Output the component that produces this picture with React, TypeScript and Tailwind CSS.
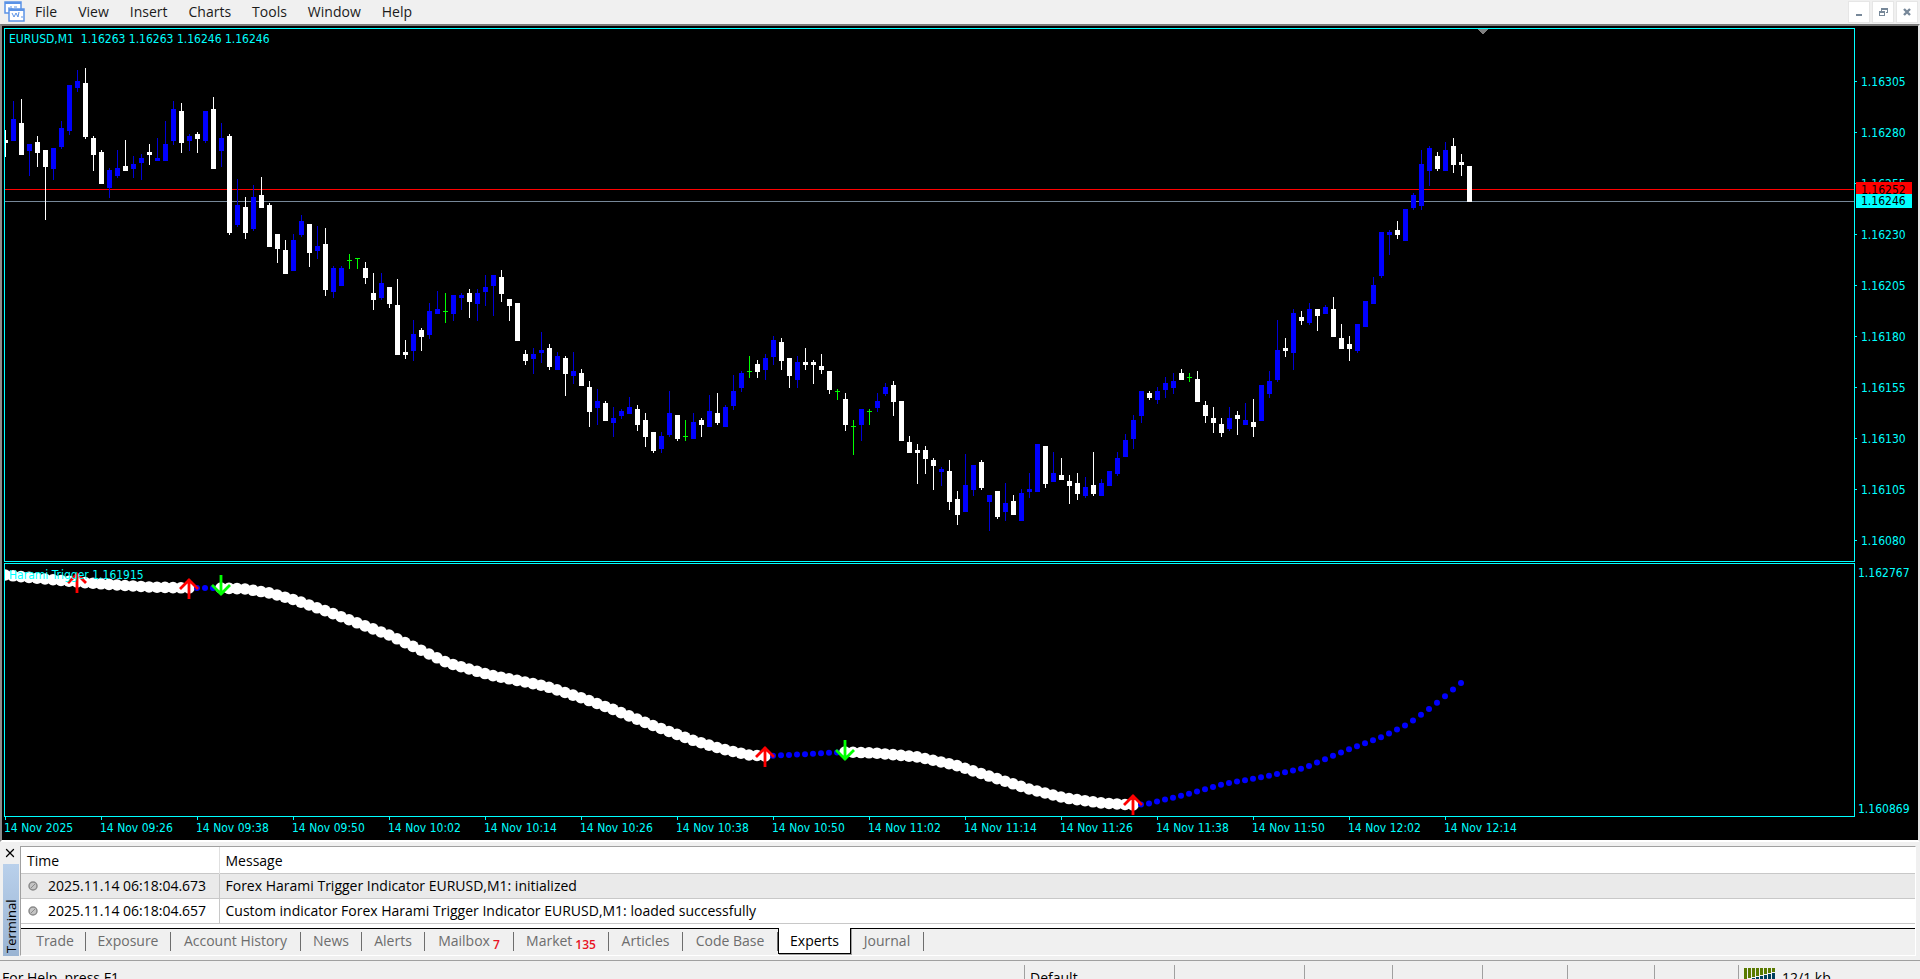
import { X } from "lucide-react";

type Kind = "up" | "down" | "flat";
type Candle = [Kind, number, number, number, number];

const U: Kind = "up";
const D: Kind = "down";
const F: Kind = "flat";

const STEP = 8;
const PRICE_TOP = 29;
const TREND_TOP = 564;

// kind, high, body top, body bottom, low
const candles: Candle[] = [
  [D, 130, 140, 143, 157], [U, 101, 119, 141, 141], [D, 99, 123, 155, 155], [U, 144, 144, 151, 176],
  [D, 136, 142, 153, 167], [D, 150, 150, 167, 220], [U, 148, 148, 169, 180], [U, 121, 128, 147, 149],
  [U, 85, 85, 131, 135], [U, 70, 81, 88, 92], [D, 68, 83, 137, 139], [D, 136, 138, 155, 171],
  [D, 150, 152, 184, 184], [U, 168, 170, 188, 198], [U, 150, 168, 176, 178], [D, 140, 166, 171, 171],
  [U, 156, 164, 169, 178], [U, 154, 158, 163, 180], [D, 144, 152, 155, 165], [U, 138, 158, 161, 161],
  [U, 121, 144, 161, 161], [U, 101, 109, 141, 145], [D, 103, 111, 143, 153], [U, 134, 136, 141, 151],
  [D, 132, 134, 139, 153], [U, 111, 111, 141, 143], [D, 97, 109, 169, 169], [U, 123, 138, 151, 167],
  [D, 134, 136, 233, 235], [U, 179, 205, 225, 227], [D, 197, 207, 233, 239], [U, 185, 197, 229, 231],
  [D, 177, 195, 208, 208], [D, 203, 205, 247, 247], [D, 234, 234, 249, 263], [D, 240, 250, 274, 274],
  [U, 234, 240, 271, 271], [U, 215, 221, 235, 237], [D, 224, 224, 253, 267], [U, 226, 246, 251, 259],
  [D, 228, 244, 290, 296], [U, 266, 268, 292, 298], [U, 266, 268, 286, 286], [F, 254, 260, 261, 269],
  [F, 258, 258, 259, 269], [D, 262, 268, 278, 284], [D, 273, 293, 300, 310], [U, 273, 283, 298, 300],
  [D, 287, 287, 304, 308], [D, 279, 305, 355, 355], [D, 340, 352, 355, 359], [U, 320, 334, 351, 361],
  [D, 328, 330, 337, 351], [U, 303, 311, 335, 339], [U, 291, 309, 314, 314], [F, 293, 311, 312, 323],
  [U, 295, 295, 314, 321], [U, 293, 295, 298, 310], [D, 289, 293, 302, 318], [U, 289, 293, 304, 321],
  [U, 275, 287, 292, 306], [U, 275, 275, 286, 316], [D, 270, 277, 294, 302], [D, 299, 299, 306, 321],
  [D, 303, 303, 341, 341], [D, 350, 354, 361, 365], [U, 348, 354, 359, 374], [U, 332, 350, 353, 363],
  [D, 344, 348, 367, 370], [U, 352, 356, 370, 370], [D, 356, 358, 374, 396], [U, 352, 371, 376, 384],
  [D, 369, 373, 386, 386], [D, 381, 387, 412, 427], [U, 389, 401, 408, 425], [D, 401, 403, 421, 421],
  [U, 407, 418, 423, 437], [U, 409, 411, 416, 419], [U, 397, 407, 414, 414], [D, 405, 409, 425, 431],
  [D, 413, 420, 437, 447], [D, 432, 432, 451, 453], [U, 432, 436, 449, 453], [U, 391, 413, 435, 437],
  [D, 415, 415, 439, 441], [F, 420, 436, 437, 441], [U, 413, 422, 439, 439], [D, 418, 420, 425, 437],
  [U, 395, 411, 427, 427], [D, 393, 413, 423, 425], [U, 405, 407, 427, 427], [U, 375, 391, 406, 410],
  [U, 371, 373, 388, 392], [F, 356, 371, 372, 378], [D, 360, 364, 372, 378], [U, 354, 358, 370, 380],
  [U, 336, 340, 357, 365], [D, 338, 342, 361, 370], [D, 358, 358, 376, 388], [U, 356, 362, 380, 388],
  [D, 348, 362, 365, 370], [D, 360, 362, 365, 384], [D, 354, 366, 370, 374], [D, 371, 371, 390, 394],
  [F, 389, 391, 392, 400], [D, 393, 399, 425, 431], [F, 420, 426, 427, 455], [U, 409, 409, 425, 441],
  [F, 409, 411, 412, 425], [U, 393, 401, 408, 412], [U, 383, 387, 394, 396], [D, 381, 385, 402, 416],
  [D, 401, 401, 441, 441], [D, 436, 442, 453, 453], [D, 444, 450, 453, 484], [D, 446, 450, 459, 474],
  [D, 458, 460, 466, 490], [U, 467, 469, 472, 486], [D, 460, 471, 502, 510], [D, 491, 499, 515, 525],
  [U, 454, 485, 512, 512], [U, 465, 465, 490, 496], [D, 460, 462, 488, 490], [U, 495, 495, 502, 531],
  [D, 491, 491, 517, 519], [U, 483, 503, 512, 521], [D, 495, 501, 515, 515], [U, 489, 493, 521, 521],
  [U, 473, 489, 492, 498], [U, 444, 444, 492, 492], [D, 446, 446, 484, 488], [U, 452, 473, 482, 482],
  [D, 458, 475, 480, 480], [D, 475, 481, 486, 504], [D, 473, 483, 494, 500], [U, 477, 487, 496, 498],
  [D, 452, 485, 494, 496], [U, 479, 483, 496, 496], [U, 471, 471, 486, 486], [U, 452, 458, 474, 476],
  [U, 434, 440, 457, 457], [U, 415, 420, 439, 449], [U, 391, 391, 416, 423], [D, 391, 393, 398, 400],
  [U, 387, 391, 400, 404], [U, 377, 383, 390, 398], [U, 373, 381, 388, 394], [D, 369, 373, 380, 380],
  [F, 373, 377, 378, 382], [D, 371, 379, 402, 402], [D, 401, 405, 416, 423], [D, 407, 418, 423, 433],
  [D, 418, 424, 433, 437], [U, 407, 418, 429, 431], [D, 411, 415, 419, 435], [U, 403, 420, 425, 425],
  [D, 399, 422, 427, 437], [U, 385, 385, 421, 421], [U, 371, 381, 394, 398], [U, 320, 350, 380, 382],
  [D, 338, 348, 351, 357], [U, 309, 313, 353, 370], [D, 311, 317, 321, 325], [U, 303, 309, 323, 325],
  [D, 309, 309, 316, 331], [U, 305, 307, 314, 314], [D, 297, 309, 337, 337], [D, 324, 338, 349, 349],
  [D, 336, 344, 349, 361], [U, 324, 324, 351, 353], [U, 301, 301, 327, 327], [U, 277, 285, 304, 304],
  [U, 232, 232, 276, 278], [U, 230, 232, 235, 255], [D, 221, 230, 235, 239], [U, 209, 209, 241, 241],
  [U, 193, 195, 208, 210], [U, 150, 164, 206, 210], [U, 146, 148, 171, 186], [D, 152, 156, 169, 171],
  [U, 142, 150, 171, 171], [D, 138, 146, 165, 173], [D, 154, 162, 165, 176], [D, 166, 166, 202, 202],
];

const candleFill: Record<Kind, string> = { up: "#0000ff", down: "#ffffff", flat: "#00ff00" };
const wickFill: Record<Kind, string> = { up: "#0000d8", down: "#ffffff", flat: "#00ff00" };

// anchor points of the trend line, x then y
const anchors: [number, number][] = [
  [0, 575], [40, 579], [72, 582], [112, 585], [145, 587], [184, 588], [216, 588], [240, 589], [265, 593],
  [290, 600], [321, 611], [384, 635], [443, 663], [485, 675], [540, 686], [577, 698], [607, 709], [644, 724],
  [687, 740], [717, 749], [744, 755], [760, 756], [803, 754], [840, 752], [870, 753], [913, 757],
  [950, 765], [987, 777], [1024, 789], [1060, 798], [1097, 803], [1128, 805], [1142, 804], [1183, 794],
  [1219, 784], [1268, 775], [1299, 768], [1342, 750], [1379, 736], [1403, 724], [1428, 706], [1456, 683],
];

function trendAt(x: number) {
  const i = Math.max(1, anchors.findIndex(([ax]) => ax >= x));
  const [x0, y0] = anchors[i - 1];
  const [x1, y1] = anchors[i];
  return y0 + ((y1 - y0) * (x - x0)) / (x1 - x0);
}

const isRising = (i: number) => (i > 23 && i < 27) || (i > 95 && i < 105) || i > 141;

const trend = Array.from({ length: 183 }, (_, i) => ({
  x: i * STEP,
  y: trendAt(i * STEP),
  rising: isRising(i),
}));

const signals = [
  { x: 72, y: 572, up: true },
  { x: 184, y: 578, up: true },
  { x: 216, y: 575, up: false },
  { x: 760, y: 746, up: true },
  { x: 840, y: 740, up: false },
  { x: 1128, y: 794, up: true },
];

const menus = ["File", "View", "Insert", "Charts", "Tools", "Window", "Help"];
const prices = ["1.16305", "1.16280", "1.16255", "1.16230", "1.16205", "1.16180", "1.16155", "1.16130", "1.16105", "1.16080"];
const times = ["2025", "09:26", "09:38", "09:50", "10:02", "10:14", "10:26", "10:38", "10:50", "11:02", "11:14", "11:26", "11:38", "11:50", "12:02", "12:14"];

const logs = [
  { time: "2025.11.14 06:18:04.673", message: "Forex Harami Trigger Indicator EURUSD,M1: initialized", row: "bg-[#eaeaea]" },
  { time: "2025.11.14 06:18:04.657", message: "Custom indicator Forex Harami Trigger Indicator EURUSD,M1: loaded successfully", row: "bg-white" },
];

const tabs = [
  { label: "Trade", width: "w-[65px] pl-1" },
  { label: "Exposure", width: "w-[85px]" },
  { label: "Account History", width: "w-[130px]" },
  { label: "News", width: "w-[61px]" },
  { label: "Alerts", width: "w-[63px]" },
  { label: "Mailbox", width: "w-[89px]", count: 7 },
  { label: "Market", width: "w-[95px]", count: 135 },
  { label: "Articles", width: "w-[74px]" },
  { label: "Code Base", width: "w-[95px]" },
  { label: "Experts", width: "w-[73px]", active: true },
  { label: "Journal", width: "w-[73px]" },
];

const statusCells = ["w-[130px]", "w-[88px]", "w-[90px]", "w-[85px]", "w-[87px]", "w-[84px]"];

function AppIcon() {
  return (
    <svg width="22" height="22" viewBox="0 0 22 22" fill="none" aria-hidden="true">
      <rect x="1" y="1" width="16" height="11" fill="#fff" stroke="#5b93e6" strokeWidth="1.5" />
      <path d="M1 2h16" stroke="#5b93e6" strokeWidth="2" />
      <path d="M4 7h2M7 5v3h2M10 6h3" stroke="#5b93e6" />
      <rect x="5" y="8" width="15" height="12" fill="#fff" stroke="#5b93e6" strokeWidth="1.5" />
      <path d="M5 9h15" stroke="#5b93e6" strokeWidth="2" />
      <path d="M8 12l2 4 2-4 2 4 1-5M17 16h2" stroke="#5b93e6" />
    </svg>
  );
}

function MenuBar() {
  const windowButton = "flex h-[22px] w-[22px] items-center justify-center border border-[#e6e6e6] bg-white text-[#778899]";
  return (
    <header className="flex h-6 shrink-0 items-center bg-[#f0f0f0] pl-1">
      <AppIcon />
      <nav className="flex flex-1 gap-[21px] pl-[9px]">
        {menus.map((menu) => (
          <button key={menu} type="button" className="leading-5">
            {menu}
          </button>
        ))}
      </nav>
      <div className="flex gap-0.5 pr-0.5">
        <button type="button" aria-label="Minimize" className={windowButton}>
          <svg width="10" height="10" viewBox="0 0 10 10"><path d="M2 7h6v2H2z" fill="currentColor" /></svg>
        </button>
        <button type="button" aria-label="Restore" className={windowButton}>
          <svg width="10" height="10" viewBox="0 0 10 10" fill="currentColor" shapeRendering="crispEdges">
            <path d="M3 1h7v5H8V5h1V3H4v1H3z" />
            <path fillRule="evenodd" d="M1 4h6v5H1zM2 6v2h4V6z" />
          </svg>
        </button>
        <button type="button" aria-label="Close" className={windowButton}>
          <svg width="10" height="10" viewBox="0 0 10 10"><path d="M2 2l6 6M8 2L2 8" stroke="currentColor" strokeWidth="2.4" /></svg>
        </button>
      </div>
    </header>
  );
}

function PriceChart() {
  return (
    <svg width="100%" height="100%" shapeRendering="crispEdges" aria-label="EURUSD M1 candles">
      <rect y={189 - PRICE_TOP} width="100%" height="1" fill="#ff0000" />
      <rect y={201 - PRICE_TOP} width="100%" height="1" fill="#778899" />
      <path d="M1472 0h11l-5.500 5.500z" fill="#808080" />
      {candles.map(([kind, high, top, bottom, low], i) => (
        <g key={i}>
          <rect x={i * STEP} y={high - PRICE_TOP} width="1" height={low - high} fill={wickFill[kind]} />
          <rect x={i * STEP - 2} y={top - PRICE_TOP} width="5" height={bottom - top} fill={candleFill[kind]} />
        </g>
      ))}
    </svg>
  );
}

function TrendChart() {
  return (
    <svg width="100%" height="100%" aria-label="Harami Trigger trend">
      {trend.map(({ x, y, rising }) => (
        <circle key={x} cx={x} cy={y - TREND_TOP} r={rising ? 3 : 5.8} fill={rising ? "#0000ff" : "#ffffff"} />
      ))}
      {signals.map(({ x, y, up }) => (
        <path
          key={x}
          d={up ? "M0 21V1M-9 11L0 2L9 11" : "M0 0v20M-9 10L0 19L9 10"}
          transform={`translate(${x} ${y - TREND_TOP})`}
          fill="none"
          stroke={up ? "#ff0000" : "#00ff00"}
          strokeWidth="2.8"
        />
      ))}
    </svg>
  );
}

function ChartWindow() {
  return (
    <main className="shrink-0 border-y-2 border-r-2 border-l-2 border-t-[#7b7b7b] border-r-[#e3e3e3] border-b-white border-l-[#8c8c8c] bg-black pt-0.5 pl-0.5 font-['DejaVu_Sans_Condensed','Noto_Sans',sans-serif] text-[12px] leading-4 text-[#00ffff]">
      <div className="flex h-[534px]">
        <section className="relative min-w-0 flex-1 overflow-hidden border border-[#00ffff]">
          <PriceChart />
          <p className="absolute top-0.5 left-1 whitespace-pre">EURUSD,M1  1.16263 1.16263 1.16246 1.16246</p>
        </section>
        <div className="relative w-[63px] shrink-0 pt-7">
          {prices.map((price) => (
            <div key={price} className="flex h-[51px] items-center gap-1">
              <span className="h-px w-0.5 bg-[#00ffff]" />
              <span>{price}</span>
            </div>
          ))}
          <span className="absolute top-[154px] left-px h-3.5 w-14 bg-[#ff0000] pl-[5px] text-black">1.16252</span>
          <span className="absolute top-[166px] left-px h-3.5 w-14 bg-[#00ffff] pl-[5px] leading-[14px] text-black">1.16246</span>
        </div>
      </div>
      <div className="mt-px flex h-[254px]">
        <section className="relative min-w-0 flex-1 overflow-hidden border border-[#00ffff]">
          <TrendChart />
          <p className="absolute top-[3px] left-1">Harami Trigger 1.161915</p>
        </section>
        <div className="flex w-[63px] shrink-0 flex-col justify-between pt-0.5 pl-[3px]">
          <span>1.162767</span>
          <span>1.160869</span>
        </div>
      </div>
      <div className="flex h-[23px] overflow-hidden">
        {times.map((time) => (
          <div key={time} className="w-24 shrink-0">
            <div className="ml-px h-[3px] w-px bg-[#00ffff]" />
            <div>14 Nov {time}</div>
          </div>
        ))}
      </div>
    </main>
  );
}

function LogTable() {
  return (
    <table className="w-full table-fixed border-collapse bg-white text-left text-black">
      <thead>
        <tr className="h-[26px] border-b border-[#c8c8c8]">
          <th className="w-[198px] border-r border-[#e0e0e0] pt-0.5 pl-1.5 font-normal">Time</th>
          <th className="pt-0.5 pl-1.5 font-normal">Message</th>
        </tr>
      </thead>
      <tbody>
        {logs.map((log) => (
          <tr key={log.time} className={`h-[25px] border-b border-[#c8c8c8] ${log.row}`}>
            <td className="border-r border-[#c8c8c8] pl-[7px]">
              <div className="flex items-center gap-2.5">
                <svg width="10" height="10" viewBox="0 0 10 10" aria-hidden="true">
                  <circle cx="5" cy="5" r="4" fill="#c4c4c4" stroke="#8a8a8a" strokeWidth="1.5" />
                  <path d="M3 7l4-4" stroke="#8a8a8a" />
                </svg>
                <span>{log.time}</span>
              </div>
            </td>
            <td className="pl-1.5">{log.message}</td>
          </tr>
        ))}
      </tbody>
    </table>
  );
}

function Terminal() {
  return (
    <section className="flex shrink-0 pt-1 pr-1">
      <aside className="flex w-5 shrink-0 flex-col pl-[3px]">
        <button type="button" aria-label="Close terminal" className="flex h-[18px] w-4 items-start justify-start text-black">
          <X size={14} strokeWidth={2.2} />
        </button>
        <div className="flex h-[92px] w-4 items-center justify-start bg-linear-to-b from-[#9ab4d3] to-[#b9d0eb] [writing-mode:vertical-rl] rotate-180">
          <span className="pt-[3px] text-[13px] leading-4 text-black">Terminal</span>
        </div>
      </aside>
      <div className="min-w-0 flex-1 border border-t-[#a0a0a0] border-r-white border-b-white border-l-[#a0a0a0]">
        <LogTable />
        <div className="h-1 bg-white" />
        <div role="tablist" className="flex h-[27px] border-t border-black text-[#6d6d6d]">
          {tabs.map((tab) =>
            tab.active ? (
              <button key={tab.label} type="button" role="tab" aria-selected="true" className={`-mt-px h-[26px] border border-t-0 border-black bg-white leading-[26px] text-black shadow-[1px_1px_0_#a0a0a0] ${tab.width}`}>
                {tab.label}
              </button>
            ) : (
              <button key={tab.label} type="button" role="tab" aria-selected="false" className={`flex h-[25px] items-center justify-end ${tab.width}`}>
                <span className="flex h-5 flex-1 justify-center gap-[3px]">
                  {tab.label}
                  {tab.count && <span className="pt-1 text-[12px] font-semibold text-[#e81123]">{tab.count}</span>}
                </span>
                <span className="h-[19px] w-px bg-[#6d6d6d]" />
              </button>
            )
          )}
        </div>
      </div>
    </section>
  );
}

function StatusBar() {
  return (
    <footer className="mt-1 flex h-[26px] shrink-0 border-t border-[#a0a0a0] pt-1 leading-[26px] text-black">
      <span className="min-w-0 flex-1 pl-0.5">For Help, press F1</span>
      <span className="w-[150px] border-l border-[#a0a0a0] pl-[5px]">Default</span>
      {statusCells.map((width) => (
        <span key={width} className={`border-l border-[#a0a0a0] ${width}`} />
      ))}
      <span className="flex w-[182px] gap-1.5 border-l border-[#a0a0a0] pl-[5px]">
        <svg width="32" height="20" viewBox="0 0 32 20" className="mt-[3px]" shapeRendering="crispEdges" aria-hidden="true">
          {[0, 1, 2, 3, 4, 5, 6, 7].map((n) => (
            <g key={n}>
              <rect x={n * 4} y="0" width="3" height={11 - n} fill="#5a7a00" />
              <rect x={n * 4} y={12 - n} width="3" height={8 + n} fill="#003f5c" />
            </g>
          ))}
        </svg>
        12/1 kb
      </span>
    </footer>
  );
}

export default function App() {
  return (
    <div className="flex h-screen flex-col overflow-hidden bg-[#f0f0f0] font-['Open_Sans','Noto_Sans',sans-serif] text-[14px] leading-5 text-[#1a1a1a]">
      <MenuBar />
      <ChartWindow />
      <Terminal />
      <StatusBar />
    </div>
  );
}
